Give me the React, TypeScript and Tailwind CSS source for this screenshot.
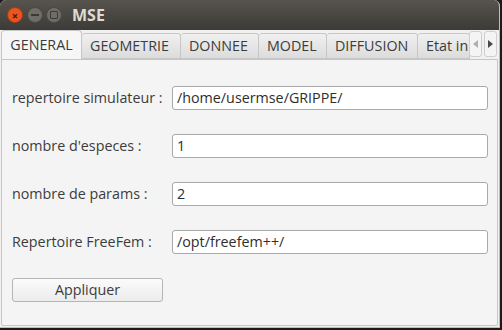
import React from "react";

const font = { fontFamily: '"Open Sans", "Noto Sans", sans-serif' };

function Field({ label, value }: { label: string; value: string }) {
  return (
    <div className="flex items-center h-[24px]">
      <div className="w-[160px] text-[14.3px] text-[#3c3c3c] whitespace-nowrap">{label}</div>
      <div className="w-[316px] h-[24px] bg-white border border-[#a9a9a9] rounded-[3px] flex items-center px-[4px] text-[14.3px] text-[#2e2e2e]">
        {value}
      </div>
    </div>
  );
}

export default function App() {
  const tabs = ["GEOMETRIE", "DONNEE", "MODEL", "DIFFUSION", "Etat in"];
  const widths = [99, 78, 68, 91, 52];
  return (
    <div className="w-[502px] h-[330px] bg-[#1e1b1a] relative overflow-hidden" style={font}>
      <div className="w-[500px] h-[328px] bg-[#f2f1f0] rounded-t-[6px] overflow-hidden flex flex-col border-r border-b border-[#bdbdbd]">
        {/* title bar */}
        <div className="h-[30px] bg-gradient-to-b from-[#57544e] to-[#3c3b37] flex items-center pl-[7px] shrink-0">
          <div className="w-[16px] h-[16px] rounded-full bg-[#e95420] border border-[#a83b14] flex items-center justify-center text-[#3a1a0d] text-[11px] font-bold leading-none">×</div>
          <div className="w-[16px] h-[16px] rounded-full bg-[#6f6d68] border border-[#4a4844] ml-[4px] flex items-center justify-center">
            <div className="w-[8px] h-[2px] bg-[#3a3935]" />
          </div>
          <div className="w-[16px] h-[16px] rounded-full bg-[#6f6d68] border border-[#4a4844] ml-[3px] flex items-center justify-center">
            <div className="w-[8px] h-[8px] border-[1.5px] border-[#3a3935] rounded-[1px]" />
          </div>
          <div className="ml-[10px] text-[16px] font-bold text-[#dfdbd2]">MSE</div>
        </div>
        {/* tab bar */}
        <div className="h-[29px] flex items-end shrink-0 relative bg-[#f2f1f0]">
          <div className="ml-[1px] w-[81px] h-[29px] bg-[#f6f6f6] border border-b-0 border-[#c6c6c6] rounded-t-[4px] flex items-center justify-center text-[14.3px] text-[#3c3c3c] relative z-10">
            GENERAL
          </div>
          {tabs.map((t, i) => (
            <div
              key={t}
              style={{ width: widths[i] }}
              className="h-[26px] bg-gradient-to-b from-[#f0f0f0] to-[#dcdcdc] border border-[#c6c6c6] border-l-0 rounded-t-[3px] flex items-center pl-[8px] text-[14.3px] text-[#3c3c3c] whitespace-nowrap overflow-hidden"
            >
              {t}
            </div>
          ))}
          <div className="absolute right-[17px] top-[1px] w-[13px] h-[26px] bg-[#f4f4f4] border border-[#cfcfcf] rounded-[3px] flex items-center justify-center">
            <div className="w-0 h-0 border-y-[4px] border-y-transparent border-r-[5px] border-r-[#b0b0b0]" />
          </div>
          <div className="absolute right-[2px] top-[1px] w-[13px] h-[26px] bg-[#f4f4f4] border border-[#cfcfcf] rounded-[3px] flex items-center justify-center">
            <div className="w-0 h-0 border-y-[4px] border-y-transparent border-l-[5px] border-l-[#4a4a4a]" />
          </div>
        </div>
        {/* pane */}
        <div className="flex-1 ml-[1px] mr-[1px] mb-[1px] bg-[#f4f4f4] border border-[#c6c6c6] rounded-b-[2px] pl-[10px] pt-[26px] flex flex-col gap-[24px]">
          <Field label="repertoire simulateur :" value="/home/usermse/GRIPPE/" />
          <Field label="nombre d'especes :" value="1" />
          <Field label="nombre de params :" value="2" />
          <Field label="Repertoire FreeFem :" value="/opt/freefem++/" />
          <div className="w-[151px] h-[24px] bg-gradient-to-b from-[#fbfbfb] to-[#ececec] border border-[#b5b5b5] rounded-[3px] flex items-center justify-center text-[14.3px] text-[#3c3c3c]">
            Appliquer
          </div>
        </div>
      </div>
    </div>
  );
}
